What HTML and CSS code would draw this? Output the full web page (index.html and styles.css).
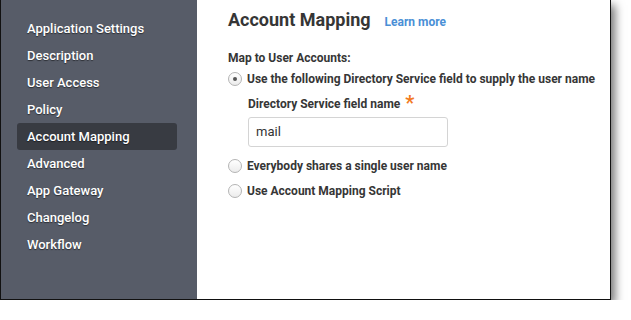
FILE: index.html
```html
<!DOCTYPE html>
<html lang="en">
<head>
  <meta charset="UTF-8" />
  <title>Account Mapping</title>
  <link rel="stylesheet" href="styles.css">
</head>
<body>

<div class="window">
  <div class="sidebar">
    <div class="nav-item">Application Settings</div>
    <div class="nav-item">Description</div>
    <div class="nav-item">User Access</div>
    <div class="nav-item">Policy</div>
    <div class="nav-item active">Account Mapping</div>
    <div class="nav-item">Advanced</div>
    <div class="nav-item">App Gateway</div>
    <div class="nav-item">Changelog</div>
    <div class="nav-item">Workflow</div>
  </div>

  <div class="content">
    <div class="title-row">
      <h1>Account Mapping</h1>
      <a class="learn" href="#">Learn more</a>
    </div>

    <div class="section-label">Map to User Accounts:</div>

    <label class="option">
      <span class="radio checked"></span>
      Use the following Directory Service field to supply the user name
    </label>

    <div class="sub-field">
      <div class="field-label">Directory Service field name<span class="req">*</span></div>
      <div class="input">mail</div>
    </div>

    <label class="option">
      <span class="radio"></span>
      Everybody shares a single user name
    </label>
    <label class="option">
      <span class="radio"></span>
      Use Account Mapping Script
    </label>
  </div>
</div>

</body>
</html>
```

FILE: styles.css
```css
* { box-sizing: border-box; }
body, html {
  margin: 0; padding: 0; background: #fff;
  font-family: Roboto, "Liberation Sans", sans-serif;
}
.window {
  display: flex;
  width: 611px;
  height: 300px;
  border: 1px solid #111;
  border-top: none;
  background: #fff;
  box-shadow: 4px 5px 9px rgba(0, 0, 0, 0.55);
}
.sidebar {
  width: 196px;
  background: #575c68;
  padding: 15px 0 0 16px;
}
.nav-item {
  width: 160px;
  height: 27px;
  line-height: 27px;
  padding-left: 10px;
  color: #fff;
  font-size: 13px;
  font-weight: 500;
  text-shadow: 0 1px 1px rgba(0, 0, 0, 0.5);
  border-radius: 3px;
}
.nav-item.active {
  background: #383b42;
}
.content {
  flex: 1;
  padding: 8px 0 0 31px;
  color: #363636;
}
.title-row {
  display: flex;
  align-items: baseline;
  gap: 14px;
  height: 24px;
}
h1 {
  margin: 0;
  font-size: 18px;
  line-height: 24px;
  font-weight: bold;
}
.learn {
  color: #4a8fd6;
  font-size: 12px;
  font-weight: bold;
  text-decoration: none;
}
.section-label {
  margin-top: 17px;
  font-size: 12px;
  font-weight: bold;
  line-height: 18px;
}
.option {
  display: flex;
  align-items: center;
  gap: 5px;
  height: 18px;
  margin-top: 3px;
  font-size: 12px;
  font-weight: bold;
  line-height: 18px;
}
.option + .option {
  margin-top: 7px;
}
.radio {
  width: 14px;
  height: 14px;
  border: 1px solid #b4b4b4;
  border-radius: 50%;
  background: linear-gradient(#fff, #ececec);
  display: flex;
  align-items: center;
  justify-content: center;
}
.radio.checked::after {
  content: "";
  width: 4px;
  height: 4px;
  border-radius: 50%;
  background: #555;
}
.sub-field {
  padding: 7px 0 0 20px;
  margin-bottom: 10px;
}
.field-label {
  font-size: 12px;
  font-weight: bold;
  line-height: 18px;
}
.req {
  color: #f27b1f;
  font-size: 20px;
  line-height: 10px;
  vertical-align: -2px;
  margin-left: 5px;
}
.input {
  margin-top: 4px;
  width: 200px;
  height: 30px;
  line-height: 28px;
  border: 1px solid #d4d4d4;
  border-radius: 3px;
  padding-left: 7px;
  font-size: 13px;
  color: #333;
}
```
